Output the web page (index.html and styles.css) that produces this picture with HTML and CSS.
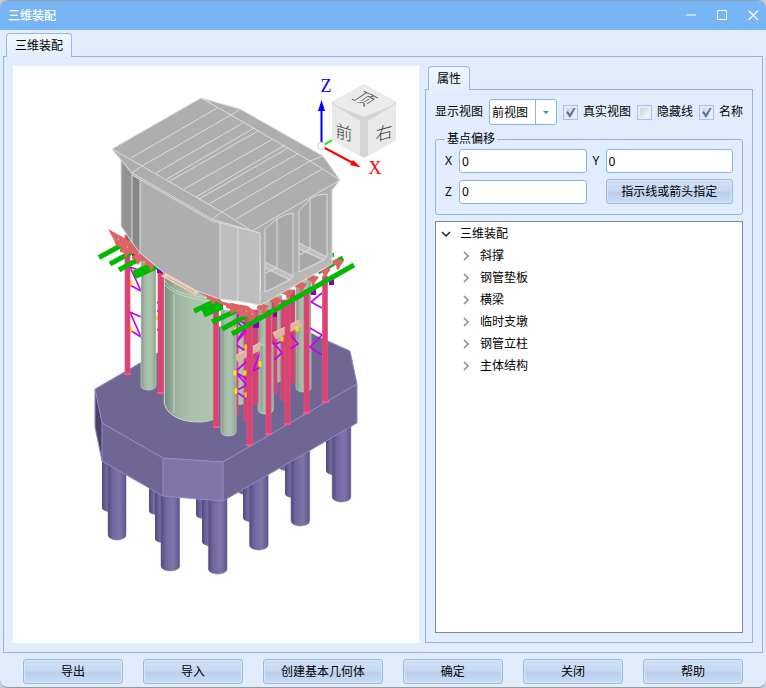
FILE: index.html
```html
<!DOCTYPE html>
<html lang="zh-CN">
<head>
<meta charset="utf-8">
<meta name="viewport" content="width=device-width, initial-scale=1">
<title>三维装配</title>
<link rel="stylesheet" href="styles.css">
</head>
<body>
<div class="window">
  <header class="titlebar">
    <h1 class="title">三维装配</h1>
    <button class="winbtn" type="button" aria-label="最小化"><svg width="11" height="11" viewBox="0 0 11 11"><path d="M0 4h10v2H0z" fill="#bcdafa"/></svg></button>
    <button class="winbtn" type="button" aria-label="最大化"><svg width="11" height="11" viewBox="0 0 11 11"><path d="M.5 .5h9v9h-9z" fill="none" stroke="#fff"/></svg></button>
    <button class="winbtn" type="button" aria-label="关闭窗口"><svg width="11" height="11" viewBox="0 0 11 11"><path d="M.5 .5l9.500 9.500M10 .5L.5 10" fill="none" stroke="#fff" stroke-width="1.200"/></svg></button>
  </header>

  <div class="tabs"><button class="tab" type="button">三维装配</button></div>

  <main class="panel main">
    <div class="viewport">
      <svg class="scene" viewBox="13 66 406 577" preserveAspectRatio="xMidYMin meet">
        <defs>
          <linearGradient id="pile"><stop offset="0" stop-color="#524a78"/><stop offset=".25" stop-color="#7166a0"/><stop offset=".65" stop-color="#8074ab"/><stop offset=".88" stop-color="#6c6297"/><stop offset="1" stop-color="#564e7c"/></linearGradient>
          <linearGradient id="green"><stop offset="0" stop-color="#7f9683"/><stop offset=".25" stop-color="#a2baa5"/><stop offset=".6" stop-color="#aec6b0"/><stop offset=".85" stop-color="#9cb59f"/><stop offset="1" stop-color="#849c88"/></linearGradient>
          <linearGradient id="pier"><stop offset="0" stop-color="#71877a"/><stop offset=".2" stop-color="#98b09d"/><stop offset=".5" stop-color="#aac2ac"/><stop offset="1" stop-color="#aec6b0"/></linearGradient>
          <g id="bracket" fill="#dc6464"><path d="M-6-3L0-5 6-3 3 1 1 5-1 6-2 1-6 0z"/></g>
          <g id="clamp" fill="#ffe600"><path d="M-1.500-2.500h3v5h-3z"/></g>
        </defs>

        <!-- rear piles -->
        <g fill="url(#pile)">
          <path d="M102 440V508a9 4 0 0 0 18 0V440z"/>
          <path d="M149 480V511a9 4 0 0 0 18 0V480z"/>
          <path d="M155 480V539a9 4 0 0 0 18 0V480z"/>
          <path d="M196 480V515a9 4 0 0 0 18 0V480z"/>
          <path d="M202 480V542a9 4 0 0 0 18 0V480z"/>
          <path d="M238 470V491a9 4 0 0 0 18 0V470z"/>
          <path d="M243 470V518a9 4 0 0 0 18 0V470z"/>
          <path d="M279 450V467a9 4 0 0 0 18 0V450z"/>
          <path d="M285 450V494a9 4 0 0 0 18 0V450z"/>
          <path d="M326 420V471a9 4 0 0 0 18 0V420z"/>
        </g>
        <!-- front piles -->
        <g fill="url(#pile)" stroke="#6b619a" stroke-width=".5">
          <path d="M108 450V535a9 5 0 0 0 18 0V450z"/>
          <path d="M161 480V566a9.300 5 0 0 0 18.600 0V480z"/>
          <path d="M208.400 490V569a9.300 5 0 0 0 18.600 0V490z"/>
          <path d="M249.500 460V545a9.300 5 0 0 0 18.600 0V460z"/>
          <path d="M291 440V521a9.300 5 0 0 0 18.600 0V440z"/>
          <path d="M332.200 410V497a9.300 5 0 0 0 18.600 0V410z"/>
        </g>

        <!-- pile cap -->
        <path d="M95 389L200 328 290 322 319 337 350 351 357 384 223 462 163 458 102 423z" fill="#706694"/>
        <path d="M95 389L102 423V461L95 427z" fill="#4a4365"/>
        <path d="M102 423L163 458V496L102 461z" fill="#706694"/>
        <path d="M163 458L223 462V501L163 496z" fill="#8074ab"/>
        <path d="M223 462L357 384V423L223 501z" fill="#706694"/>
        <path d="M142 362L95 389V427L102 461 163 496 223 501 357 423V384L350 351 319 337M95 389L102 423 163 458 223 462 357 384M102 423V461M163 458V496M223 462V501" fill="none" stroke="#9488c8"/>

        <!-- rear columns -->
        <g fill="url(#green)" stroke="#c2dcc6" stroke-width=".6">
          <path d="M233 310V402q7 5 13 0V310z"/>
          <path d="M268 295V380q7 5 14 0V295z"/>
          <path d="M296 280V388a7.500 4 0 0 0 15 0V280z"/>
          <path d="M258 300V410a7.500 4 0 0 0 15 0V300z"/>
        </g>
        <g fill="#c84670" stroke="#ee4a80" stroke-width=".7">
          <path d="M234 310h4V415h-4zM244 310h4V421h-4zM252 310h6V403q-3 2-6 0zM272 300h5V393q-2 2-5 0zM290 290h5V382q-2 2-5 0zM281 300h5V400q-2 2-5 0z"/>
        </g>

        <!-- cross bracing and clamps -->
        <g fill="none" stroke="#c800f0" stroke-width="1.700">
          <path d="M130 267L141 271M130 267L141 291 130 285M130 312L141 317M130 312L141 337 130 330"/>
          <path d="M157 303L165 298M157 330L165 326M157 311h7"/>
          <path d="M247 309L235 318 247 325 235 344 247 352M247 330L235 344M247 361L235 372 247 379M235 372L247 385 235 391 247 399"/>
          <path d="M235 318L246 333M261 350L253 371 261 367M273 342L282 353 274 360M290 334L298 344 290 349M274 345L284 340"/>
          <path d="M311 302L322 293M311 302L322 308M310 328L322 335M322 335L310 347 322 355"/>
        </g>
        <use href="#clamp" x="131" y="283"/><use href="#clamp" x="131" y="329"/><use href="#clamp" x="164" y="327"/><use href="#clamp" x="157" y="318"/>
        <g stroke="#dfb5a2" stroke-width="7"><path d="M236 359L263 345M274 336L301 323"/></g>
        <path d="M235 356L261 342M273 333L299 320" stroke="#f0cbb9" stroke-width="1"/>

        <!-- front columns -->
        <g fill="url(#green)" stroke="#c2dcc6" stroke-width=".7">
          <path d="M141 255V386a7.500 4 0 0 0 15 0V255z"/>
          <path d="M221 310V432a7.500 4 0 0 0 15 0V310z"/>
          <path d="M260 345V410a6.500 4 0 0 0 13 0V345z"/>
        </g>
        <use href="#clamp" x="235" y="330"/><use href="#clamp" x="246" y="347"/><use href="#clamp" x="235" y="373"/><use href="#clamp" x="245" y="373"/>
        <use href="#clamp" x="246" y="395"/><use href="#clamp" x="260" y="364"/><use href="#clamp" x="282" y="339"/><use href="#clamp" x="297" y="329"/><use href="#clamp" x="236" y="391"/>
        <path d="M163 270V403C166 415 180 422 198 422Q210 422 219 417V290z" fill="url(#pier)"/>
        <path d="M164.500 275V404C168 416 182 422 198 422Q210 422 219 417M164 279C170 291 185 296 219 299M164 284C173 294 188 299 219 302M174 294V413" fill="none" stroke="#c2dcc6" stroke-width=".9"/>
        <g fill="#d74472" stroke="#ee4a80" stroke-width=".7">
          <path d="M125 235h5V374q-2.500 3-5 0zM158 268h5.500V393q-3 3-5.500 0zM213.500 305h5V426q-2.500 3-5 0z"/>
          <path d="M247 318h5.500V444q-3 3-5.500 0zM266 310h5V433q-2.500 3-5 0zM285 300h5V423q-2.500 3-5 0zM304 290h5V412q-2.500 3-5 0zM322.500 276h5V401q-2.500 3-5 0z"/>
        </g>
        <g fill="#f55488"><path d="M124 373h7v2h-7zM157 392h7v2h-7zM213 426h7v2h-7zM246 444h7v2h-7zM265 433h7v2h-7zM284 423h7v2h-7zM303 412h7v2h-7zM322 401h7v2h-7z"/></g>

        <!-- support beams -->
        <g fill="#8a00bf"><path d="M121 246h5v5h-5zM132 252h5v5h-5zM157 268h6v5h-6zM253 322h6v6h-6zM273 312h4v5h-4zM311 289h5v6h-5zM329 279h5v6h-5zM219 303h4v4h-4z"/></g>
        <g fill="none" stroke="#00b900" stroke-width="5">
          <path d="M318 272L343 258M99 257.500L121 245.500M110 264L133 251.500M119 270L141 258M194 311L220 299M212 322L236 311M222 329L248 315M232 334L354 265"/>
          <path d="M134 275L158 264M203 313L222 305" stroke-width="9"/>
        </g>
        <path d="M333 253v4M127 240h5" stroke="#00b900" stroke-width="2"/>
        <path d="M108 229L130 241 152 259 165 269 148 262 139 260 134 254 126 253 121 247 116 246 114 240z" fill="#dc6464"/>
        <path d="M148 259L165 270 197 290 222 303 250 311" fill="none" stroke="#dc6464" stroke-width="3"/>
        <path d="M230 303l18 3 10 8-6 7-4-5-8 1-3-5-6-1z" fill="#dc6464"/>
        <use href="#bracket" x="126" y="252"/><use href="#bracket" x="138" y="259"/><use href="#bracket" x="151" y="265"/><use href="#bracket" x="213" y="299"/><use href="#bracket" x="232" y="308"/><use href="#bracket" x="250" y="316"/>
        <use href="#bracket" x="263" y="309"/><use href="#bracket" x="276" y="302"/><use href="#bracket" x="288" y="294"/><use href="#bracket" x="301" y="287"/><use href="#bracket" x="313" y="280"/><use href="#bracket" x="325" y="272"/><use href="#bracket" x="338" y="264"/>
        <path d="M118 239h1M127 247h1M138 254h1M246 311h1M252 314h1" stroke="#f6d9d9" stroke-width="1"/>
        <path d="M166 276L195 292 198 290 170 274z" fill="#dfb5a2" stroke="#f0cbb9" stroke-width="5"/>
        <path d="M167 277L194 292M171 275L197 290" stroke="#b98c7c" stroke-width=".6"/>

        <!-- box girder -->
        <path d="M121 160L133 174V244L121 226z" fill="#949494"/>
        <path d="M132 172L140 178V253L132 242z" fill="#868686"/>
        <path d="M140 178L213 219H220V299L197 291 163 272 150 262 140 253z" fill="#aeaeae"/>
        <path d="M220 219L260 230V305L238 301 220 299z" fill="#bebebe"/>
        <path d="M251 229L332 182V264L261 305 260 233z" fill="#aeaeae"/>
        <path d="M260 292L332 251V264L261 305z" fill="#b8b8b8"/>
        <path d="M112 149L201 98 240 109 323 156 340 180 332 190 252 232 212 220 132 175z" fill="#aeaeae"/>
        <path d="M265 229L277 219 285 215 293 213V276L265 292zM299 211L310 199 318 195 327 194V256L299 272z" fill="#a9a9a9"/>
        <path d="M265 262L293 276 290 280 265 268zM299 243L327 257 324 261 299 249z" fill="#c0c0c0"/>
        <g fill="none" stroke="#dcdcdc">
          <path d="M112 149L201 98 240 109 323 156 340 180 252 231 212 219 132 173zM132 175L212 221 260 233M112 149L121 160"/>
          <path d="M201 98L231 115 310 161 340 180M112 149L142 166 222 212 252 231"/>
          <path d="M131 158L217 108M132 173L142 166 231 115 240 109M156 173L243 123M167 179L254 128M170 181L258 131M184 189L273 139M196 197L285 145M199 199L288 148M209 204L299 153M212 219L222 212 310 161 323 156M236 219L322 169"/>
          <path d="M121 161V226L131 241 140 253 150 261 163 272 197 291 220 299 238 301 261 305 332 264V190L340 180M132 175V242M140 180V253M220 222V299M238 227V301M260 233V305"/>
          <path d="M265 229L277 219 285 215 293 213V276L290 280 265 292zM277 219V268M265 262L293 276M265 268L290 280M265 273L277 268"/>
          <path d="M299 211L310 199 318 195 327 194V256L324 260 299 272zM310 199V249M299 243L327 257M299 249L324 260M299 255L310 249"/>
        </g>

        <!-- view cube -->
        <path d="M364 84L396 102V140L364 158 332 140V102z" fill="#d5d5d5"/>
        <path d="M364 84L393 100.500Q396 102 393 105L364 117 335 105Q332 102 335 100.500z" fill="#ebebeb"/>
        <path d="M332 104L360 121V156L332 140z" fill="#e9e9e9"/>
        <path d="M396 104L368 121V156L396 140z" fill="#e9e9e9"/>
        <g class="cube-text">
          <text transform="translate(365 98) rotate(28) skewX(-28)" x="0" y="7">顶</text>
          <text transform="translate(344 132) skewY(16)" x="0" y="7">前</text>
          <text transform="translate(384 132) skewY(-16)" x="0" y="7">右</text>
        </g>
        <path d="M324 145L332 140" stroke="#00f000" stroke-width="2"/>
        <path d="M321.500 143V108" stroke="#00f" stroke-width="2"/><path d="M321.500 100L325 111H318z" fill="#00f"/>
        <path d="M323 147L352 162.500" stroke="#f00" stroke-width="2"/><path d="M361 167.500L350 165 353 160z" fill="#f00"/>
        <circle cx="321.500" cy="146" r="3.700" fill="#fff" stroke="#ccc"/>
        <text class="axis" x="326" y="92" text-anchor="middle" fill="#00f">Z</text>
        <text class="axis" x="375" y="174" text-anchor="middle" fill="#f00">X</text>
      </svg>
    </div>

    <aside class="side">
      <div class="side-tabs"><button class="tab" type="button">属性</button></div>
      <section class="panel props">
        <div class="options">
          <label for="view">显示视图</label>
          <span class="combo"><select id="view"><option>前视图</option></select></span>
          <label class="check"><input type="checkbox" checked>真实视图</label>
          <label class="check"><input type="checkbox">隐藏线</label>
          <label class="check"><input type="checkbox" checked>名称</label>
        </div>
        <fieldset class="offset">
          <legend>基点偏移</legend>
          <div class="fields">
            <label for="x">X</label><input id="x" type="text" value="0">
            <label class="second" for="y">Y</label><input id="y" type="text" value="0">
            <label for="z">Z</label><input id="z" type="text" value="0">
            <button class="btn pick" type="button">指示线或箭头指定</button>
          </div>
        </fieldset>
        <div class="tree">
          <button class="node root" type="button"><svg width="10" height="10" viewBox="0 0 10 10"><path d="M1 3l4 4 4-4"/></svg>三维装配</button>
          <ul>
            <li><button class="node" type="button"><svg width="10" height="10" viewBox="0 0 10 10"><path d="M3 1l4 4-4 4"/></svg>斜撑</button></li>
            <li><button class="node" type="button"><svg width="10" height="10" viewBox="0 0 10 10"><path d="M3 1l4 4-4 4"/></svg>钢管垫板</button></li>
            <li><button class="node" type="button"><svg width="10" height="10" viewBox="0 0 10 10"><path d="M3 1l4 4-4 4"/></svg>横梁</button></li>
            <li><button class="node" type="button"><svg width="10" height="10" viewBox="0 0 10 10"><path d="M3 1l4 4-4 4"/></svg>临时支墩</button></li>
            <li><button class="node" type="button"><svg width="10" height="10" viewBox="0 0 10 10"><path d="M3 1l4 4-4 4"/></svg>钢管立柱</button></li>
            <li><button class="node" type="button"><svg width="10" height="10" viewBox="0 0 10 10"><path d="M3 1l4 4-4 4"/></svg>主体结构</button></li>
          </ul>
        </div>
      </section>
    </aside>
  </main>

  <footer class="actions">
    <button class="btn" type="button">导出</button>
    <button class="btn" type="button">导入</button>
    <button class="btn wide" type="button">创建基本几何体</button>
    <button class="btn" type="button">确定</button>
    <button class="btn" type="button">关闭</button>
    <button class="btn" type="button">帮助</button>
  </footer>
</div>
</body>
</html>
```
FILE: styles.css
```css
* { box-sizing: border-box; }

body {
  margin: 0;
  background: #c9ccd0;
  color: #000;
  font: 12px/16px "Noto Sans", "Noto Sans CJK SC", sans-serif;
}

button, input, select { font: inherit; color: inherit; margin: 0; }

.window {
  display: flex;
  flex-direction: column;
  min-height: 100vh;
  border-top: 1px solid #8ea3bb;
  border-bottom: 1px solid #96999e;
  border-radius: 8px;
  background: #e1edfc;
  overflow: hidden;
}

.titlebar {
  display: flex;
  align-items: center;
  gap: 11px;
  height: 29px;
  padding: 0 3px 0 8px;
  background: #78b5f4;
}
.title { flex: 1; margin: 0; color: #fff; font-size: 12px; font-weight: 500; }
.winbtn {
  display: grid;
  place-items: center;
  width: 20px;
  height: 20px;
  padding: 0;
  border: 0;
  background: none;
}

.tabs { padding: 3px 6px 0; }
.side-tabs { padding: 0 3px; }
.tab {
  position: relative;
  display: block;
  height: 24px;
  margin-bottom: -1px;
  padding: 1px 8px 0;
  border: 1px solid #92b9ea;
  border-bottom: 0;
  border-radius: 4px 4px 0 0;
  background: linear-gradient(#f1f6fd, #e4effc);
}

.panel { border: 1px solid #92b4e4; padding: 9px; }

.main {
  flex: 1;
  display: grid;
  grid-template-columns: minmax(0, 1fr) 328px;
  gap: 6px;
  margin: 0 3px;
}
.viewport { background: #fff; }
.scene { display: block; width: 100%; }
.cube-text {
  font: 17px "Noto Sans CJK SC", sans-serif;
  font-weight: 300;
  fill: #3c3c3c;
  text-anchor: middle;
}
.axis { font: 18px "Liberation Serif", serif; }

.side { display: flex; flex-direction: column; }
.props { flex: 1; display: flex; flex-direction: column; }

.options { display: flex; align-items: center; gap: 6px; white-space: nowrap; }
.combo { position: relative; flex: 1; display: flex; }
.combo select {
  appearance: none;
  width: 100%;
  height: 26px;
  padding: 1px 22px 0 2px;
  border: 1px solid #8cb2e4;
  border-radius: 3px;
  background: linear-gradient(#8cb2e4, #8cb2e4) right 20px top / 1px 100% no-repeat #fff;
}
.combo::after {
  content: "";
  position: absolute;
  right: 8px;
  top: 12px;
  border: 3px solid transparent;
  border-top-color: #5580b4;
  border-bottom: 0;
  pointer-events: none;
}

.check { display: flex; align-items: center; gap: 5px; }
.check input {
  appearance: none;
  display: grid;
  place-items: center;
  width: 15px;
  height: 15px;
  border: 1px solid #a9c0e2;
  background: linear-gradient(135deg, #cdd3dc, #f6f7f9) content-box #e6ebf2;
  padding: 2px;
}
.check input:checked::after {
  content: "";
  width: 10px;
  height: 10px;
  background: #5b7b9e;
  clip-path: polygon(0 45%, 20% 38%, 40% 62%, 80% 0, 100% 0, 45% 100%, 35% 100%);
}

.offset {
  min-width: 0;
  margin: 6px 0;
  padding: 2px 9px 10px;
  border: 1px solid #92b4e4;
  border-radius: 3px;
}
.offset legend { padding: 0 2px; }
.fields {
  display: grid;
  grid-template-columns: 14px minmax(0, 1fr) 19px minmax(0, 1fr);
  row-gap: 6px;
  align-items: center;
}
.fields .second { padding-left: 6px; }
.fields input {
  width: 100%;
  height: 24px;
  padding: 0 2px;
  border: 1px solid #8cb2e4;
  border-radius: 3px;
  background: #fff;
}
.pick { grid-column: 4; }

.btn {
  height: 25px;
  padding: 1px 0 0;
  border: 1px solid #9cb8e0;
  border-radius: 3px;
  background: linear-gradient(#cfe0f5, #c6d9f2 48%, #b9cfec 52%, #cadcf4);
  box-shadow: inset 0 0 0 1px #d6e4f7;
  white-space: nowrap;
}

.tree { flex: 1; border: 1px solid #828790; background: #fff; }
.tree ul { margin: 0; padding: 0; list-style: none; }
.node {
  display: flex;
  align-items: center;
  gap: 9px;
  width: 100%;
  height: 22px;
  padding: 1px 0 0 25px;
  border: 0;
  background: none;
}
.node.root { padding-left: 5px; }
.node svg { fill: none; stroke: #8a8a8a; stroke-width: 1.5; }
.node.root svg { stroke: #222; }

.actions { display: flex; gap: 20px; padding: 6px 23px 3px; }
.actions .btn { flex: 100 1 0; }
.actions .wide { flex-grow: 120; }
```
